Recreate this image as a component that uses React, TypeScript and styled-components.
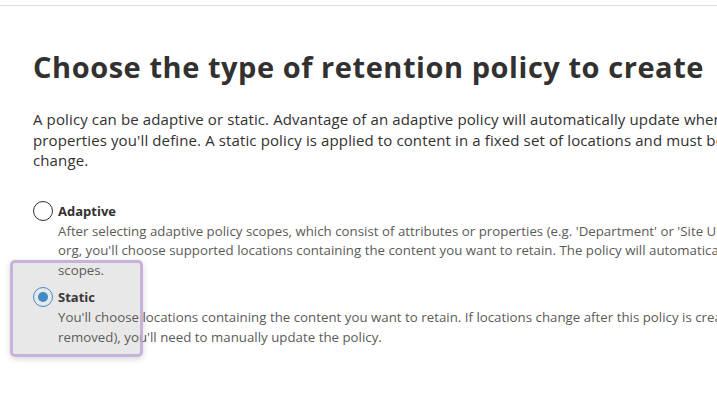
import React from "react";
import styled, { createGlobalStyle } from "styled-components";

const Global = createGlobalStyle`
  html, body { margin: 0; padding: 0; background: #ffffff; }
  body {
    font-family: "Open Sans", "Noto Sans", "Liberation Sans", sans-serif;
    color: #323130;
    width: 717px;
    height: 403px;
    overflow: hidden;
  }
`;

const Page = styled.div`
  position: relative;
  width: 717px;
  height: 403px;
  overflow: hidden;
`;

const TopBar = styled.div`
  height: 5px;
  border-bottom: 1px solid #e1dfdd;
`;

const Content = styled.main`
  padding: 43px 0 0 33px;
  display: flex;
  flex-direction: column;
`;

const Title = styled.h1`
  margin: 0;
  font-size: 29px;
  line-height: 36px;
  font-weight: 700;
  letter-spacing: 0.55px;
  white-space: nowrap;
  color: #323130;
`;

const Intro = styled.p`
  margin: 24px 0 0;
  font-size: 15px;
  line-height: 20.5px;
  letter-spacing: 0.12px;
  color: #323130;
`;

const Line = styled.span`
  display: block;
  white-space: nowrap;
`;

const Choices = styled.div`
  margin-top: 30px;
  display: flex;
  flex-direction: column;
  gap: 7px;
`;

const Option = styled.div`
  display: grid;
  grid-template-columns: 20px 1fr;
  column-gap: 5px;
`;

const Radio = styled.span<{ $checked?: boolean }>`
  box-sizing: border-box;
  width: 20px;
  height: 20px;
  border-radius: 50%;
  border: 1px solid ${(p) => (p.$checked ? "#3d90dc" : "#323130")};
  display: flex;
  align-items: center;
  justify-content: center;
  &::after {
    content: "";
    display: ${(p) => (p.$checked ? "block" : "none")};
    width: 10px;
    height: 10px;
    border-radius: 50%;
    background: #3d90dc;
  }
`;

const OptionText = styled.div`
  display: flex;
  flex-direction: column;
`;

const Label = styled.span`
  font-size: 13px;
  line-height: 21px;
  font-weight: 700;
  color: #323130;
`;

const Desc = styled.div`
  font-size: 13.25px;
  line-height: 19.5px;
  letter-spacing: 0.02px;
  color: #5c5a58;
`;

const Highlight = styled.div`
  position: absolute;
  left: 10px;
  top: 260px;
  width: 133px;
  height: 97px;
  box-sizing: border-box;
  border: 3px solid rgba(190, 165, 212, 0.8);
  border-radius: 5px;
  background: rgba(102, 102, 102, 0.15);
  box-shadow: 0 2px 6px rgba(0, 0, 0, 0.16);
`;

export default function App() {
  return (
    <Page>
      <Global />
      <TopBar />
      <Content>
        <Title>Choose the type of retention policy to create</Title>
        <Intro>
          <Line>
            A policy can be adaptive or static. Advantage of an adaptive policy will automatically update when users'
          </Line>
          <Line>
            properties you'll define. A static policy is applied to content in a fixed set of locations and must be updated if those locations
          </Line>
          <Line>change.</Line>
        </Intro>
        <Choices>
          <Option>
            <Radio />
            <OptionText>
              <Label>Adaptive</Label>
              <Desc>
                <Line>
                  After selecting adaptive policy scopes, which consist of attributes or properties (e.g. 'Department' or 'Site URL') in your
                </Line>
                <Line>
                  org, you'll choose supported locations containing the content you want to retain. The policy will automatically update based on those
                </Line>
                <Line>scopes.</Line>
              </Desc>
            </OptionText>
          </Option>
          <Option>
            <Radio $checked />
            <OptionText>
              <Label>Static</Label>
              <Desc>
                <Line>
                  You'll choose locations containing the content you want to retain. If locations change after this policy is created (e.g. sites are added or
                </Line>
                <Line>removed), you'll need to manually update the policy.</Line>
              </Desc>
            </OptionText>
          </Option>
        </Choices>
      </Content>
      <Highlight />
    </Page>
  );
}
